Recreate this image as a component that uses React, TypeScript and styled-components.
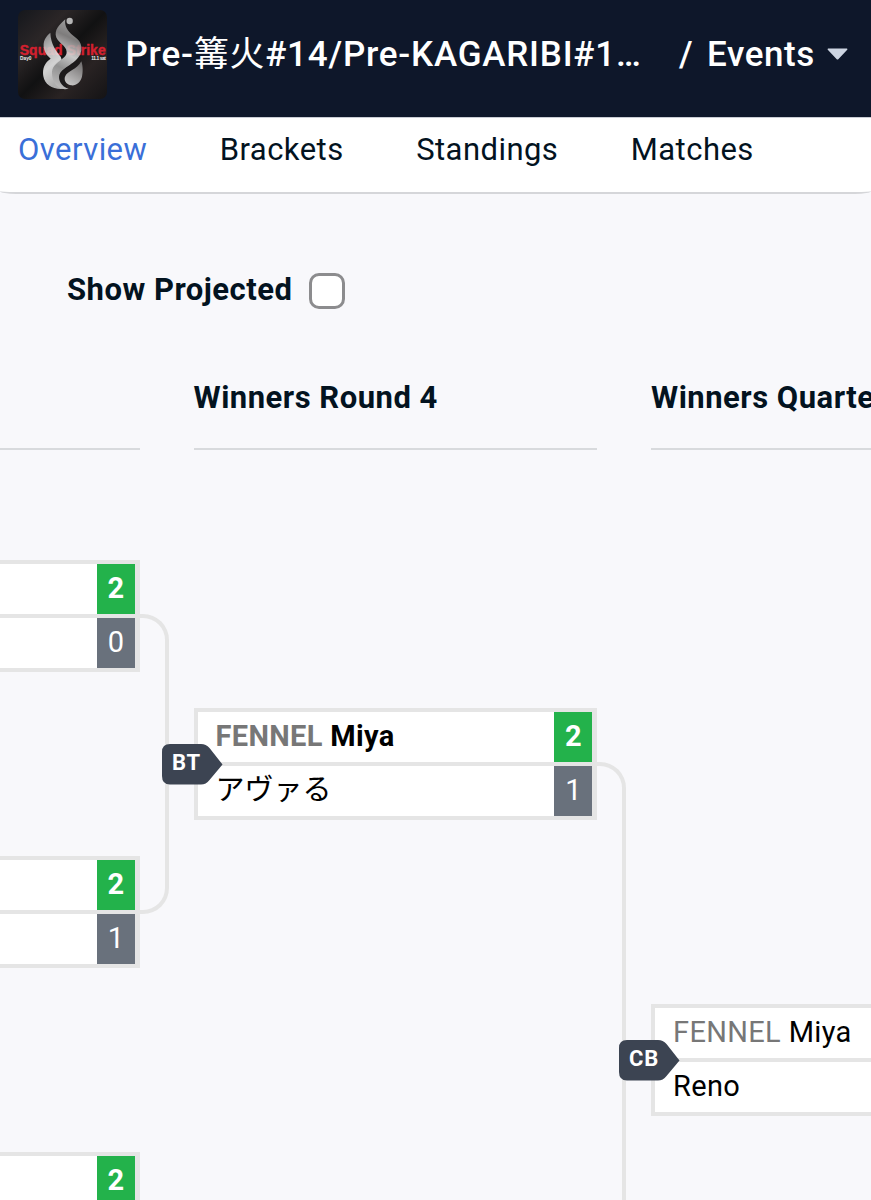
import React from "react";
import styled, { createGlobalStyle } from "styled-components";

const GlobalStyle = createGlobalStyle`
  * { box-sizing: border-box; }
  html, body { margin: 0; padding: 0; }
  body {
    background: #f8f8fb;
    color: #03131f;
    font-family: Roboto, "Noto Sans CJK JP", sans-serif;
    overflow: hidden;
  }
`;

const Page = styled.div`
  width: 871px;
  height: 1200px;
  overflow: hidden;
  background: #f8f8fb;
`;

const Header = styled.header`
  display: flex;
  align-items: center;
  height: 117px;
  padding: 0 0 8px 18px;
  background: #0e172a;
  color: #fff;
  font-size: 35px;
  font-weight: 500;
  line-height: 42px;
  white-space: nowrap;
`;

const Logo = styled.svg`
  flex: none;
  width: 89px;
  height: 89px;
  margin-right: 18.5px;
`;

const Title = styled.h1`
  flex: none;
  width: 553.5px;
  margin: 0;
  font: inherit;
  letter-spacing: 0.78px;
`;

const Kanji = styled.span`
  font-weight: 400;
  font-size: 35px;
`;

const Slash = styled.span`
  width: 28px;
`;

const Events = styled.span`
  letter-spacing: 0.6px;
  margin-right: 12.5px;
`;

const Caret = styled.svg`
  width: 21px;
  height: 12px;
  margin-top: -2px;
`;

const Nav = styled.nav`
  display: flex;
  gap: 72.5px;
  height: 77px;
  padding: 13px 0 0 18px;
  background: #fff;
  border-top: 1px solid #c9ccd4;
  border-bottom: 2px solid #d5d6d9;
  border-radius: 0 0 16px 16px / 0 0 3px 3px;
`;

const Tab = styled.a<{ $active?: boolean }>`
  font-size: 31px;
  line-height: 38px;
  letter-spacing: 0.45px;
  color: ${(p) => (p.$active ? "#3a6fd8" : "#03131f")};
`;

const Projected = styled.label`
  display: flex;
  align-items: center;
  gap: 17px;
  height: 36px;
  margin: 79px 0 0 67px;
  font-size: 31px;
  font-weight: 700;
  letter-spacing: 0.5px;
`;

const ProjectedText = styled.span`
  line-height: 36px;
  margin-top: -3px;
`;

const Checkbox = styled.input`
  appearance: none;
  width: 36px;
  height: 36px;
  margin: 0;
  border: 3px solid #8c8c8e;
  border-radius: 10px;
  background: #fff;
`;

const Board = styled.main`
  display: flex;
  width: 1400px;
  margin: 67px 0 0 -264px;
`;

const Round = styled.section`
  flex: none;
  width: 403.5px;
`;

const RoundTitle = styled.h2`
  height: 74px;
  margin: 0;
  padding-top: 1px;
  border-bottom: 2px solid #d8dadd;
  font-size: 31px;
  line-height: 42px;
  font-weight: 700;
  letter-spacing: 0.5px;
  white-space: nowrap;
`;

const Match = styled.article<{ $gap: number }>`
  position: relative;
  display: flex;
  flex-direction: column;
  gap: 4px;
  height: 112px;
  margin-top: ${(p) => p.$gap}px;
  padding: 4px 4.6px 4px 4px;
  background: #e5e5e5;
`;

const Entrant = styled.div<{ $winner?: boolean }>`
  display: flex;
  flex: 1;
  background: #fff;
  color: #000;
  font-size: 29px;
  line-height: 49px;
  font-weight: ${(p) => (p.$winner ? 700 : 400)};
`;

const Name = styled.span`
  flex: 1;
  padding-left: 18px;
  letter-spacing: 0.35px;
  white-space: nowrap;
`;

const Kana = styled.span`
  display: inline-block;
  font-size: 29px;
  line-height: 48px;
  letter-spacing: 0;
  vertical-align: top;
`;

const Prefix = styled.span`
  color: #777;
`;

const Score = styled.span<{ $winner?: boolean }>`
  width: 38px;
  background: ${(p) => (p.$winner ? "#23b24b" : "#69717c")};
  color: #fff;
  text-align: center;
`;

const Gutter = styled.div`
  flex: none;
  width: 54px;
`;

const Connector = styled.div<{ $top: number; $height: number }>`
  width: 29px;
  height: ${(p) => p.$height}px;
  margin-top: ${(p) => p.$top}px;
  border: 4px solid #e5e5e5;
  border-left: 0;
  border-radius: 0 26px 26px 0;
`;

const Badge = styled.div`
  position: absolute;
  left: -32px;
  top: 35.5px;
  width: 61px;
  height: 41px;
`;

const BadgeShape = styled.svg`
  position: absolute;
  inset: 0;
`;

const BadgeText = styled.span`
  position: relative;
  display: block;
  width: 50px;
  color: #fff;
  font-size: 22px;
  line-height: 38px;
  font-weight: 700;
  letter-spacing: 0.7px;
  text-align: center;
`;

type Player = { prefix?: string; name?: React.ReactNode; score?: number; winner?: boolean };

function MatchCard({ gap, id, players }: { gap: number; id?: string; players: Player[] }) {
  return (
    <Match $gap={gap}>
      {players.map((p, i) => (
        <Entrant key={i} $winner={p.winner}>
          <Name>
            {p.prefix && <Prefix>{p.prefix} </Prefix>}
            {p.name}
          </Name>
          {p.score !== undefined && <Score $winner={p.winner}>{p.score}</Score>}
        </Entrant>
      ))}
      {id && (
        <Badge>
          <BadgeShape width="61" height="41" viewBox="0 0 61 41">
            <path
              d="M8 0H39Q44 0 47.500 4L60.500 20.500L47.500 36Q44 40.500 39 40.500H8Q0 40.500 0 32V8Q0 0 8 0Z"
              fill="#3c4452"
            />
          </BadgeShape>
          <BadgeText>{id}</BadgeText>
        </Badge>
      )}
    </Match>
  );
}

function EventLogo() {
  return (
    <Logo viewBox="0 0 89 89" fontFamily="Liberation Sans" fontWeight="700">
      <defs>
        <linearGradient id="backdrop" x1="0" y1="0" x2="1" y2="1">
          <stop offset="0" stopColor="#15171c" />
          <stop offset="0.28" stopColor="#2b2627" />
          <stop offset="0.5" stopColor="#111112" />
          <stop offset="0.72" stopColor="#292323" />
          <stop offset="1" stopColor="#141315" />
        </linearGradient>
        <linearGradient id="outer" x1="0" y1="0" x2="0.3" y2="1">
          <stop offset="0" stopColor="#8a8a8c" />
          <stop offset="0.3" stopColor="#c9c9c9" />
          <stop offset="0.65" stopColor="#f0f0f0" />
          <stop offset="1" stopColor="#c4c4c4" />
        </linearGradient>
        <linearGradient id="ribbon" x1="0.6" y1="0" x2="0.4" y2="1">
          <stop offset="0" stopColor="#b5b5b5" />
          <stop offset="0.25" stopColor="#8d8b8b" />
          <stop offset="0.5" stopColor="#e2e2e2" />
          <stop offset="0.72" stopColor="#a3a3a3" />
          <stop offset="1" stopColor="#d0d0d0" />
        </linearGradient>
        <linearGradient id="lobe" x1="0.8" y1="0" x2="0.3" y2="1">
          <stop offset="0" stopColor="#7e7c7c" />
          <stop offset="1" stopColor="#dedede" />
        </linearGradient>
      </defs>
      <rect width="89" height="89" rx="7" fill="url(#backdrop)" />
      <text x="1.700" y="45" fill="#d3202f" stroke="#d3202f" strokeWidth="0.400" fontSize="14" textLength="86">
        Squad Strike
      </text>
      <g transform="translate(-2 -2) scale(0.3333)" opacity="0.87">
        <path
          d="M103 74C85 88 74 112 92 140L104 152C88 162 78 180 82 205C86 230 110 245 140 243C118 228 110 200 124 184C136 170 140 156 134 146C122 130 104 110 103 74Z"
          fill="url(#outer)"
        />
        <path
          d="M148 34C138 44 118 58 119 80C121 104 152 110 152 132C152 156 108 160 108 196C108 222 124 240 140 243C148 244 154 243 158 242C132 228 126 205 138 190C152 172 192 160 196 126C200 96 174 88 160 72C148 58 146 46 148 34Z"
          fill="url(#ribbon)"
        />
        <path d="M190 160C170 172 138 180 130 200C126 216 136 236 158 242C150 236 142 218 148 204C156 190 184 184 190 160Z" fill="#1d1b1c" />
        <path d="M196 160C202 176 200 196 198 206C194 222 180 234 166 232C150 230 142 216 148 204C154 190 184 184 196 160Z" fill="url(#lobe)" />
        <circle cx="161" cy="39" r="9.500" fill="#cdcdcd" />
      </g>
      <text x="2" y="50" fill="#eee" fontSize="4.800" textLength="11.500">
        Day0
      </text>
      <text x="73.300" y="50" fill="#eee" fontSize="4.800" textLength="14.500">
        11.1 sat
      </text>
    </Logo>
  );
}

export default function App() {
  return (
    <Page>
      <GlobalStyle />
      <Header>
        <EventLogo />
        <Title>
          Pre-<Kanji lang="ja">篝火</Kanji>#14/Pre-KAGARIBI#1…
        </Title>
        <Slash>/</Slash>
        <Events>Events</Events>
        <Caret viewBox="0 0 21 12">
          <path d="M1 0.500H20Q21 1 20 2L11.500 11Q10.500 12 9.500 11L1 2Q0 1 1 0.500Z" fill="#cdd5e2" />
        </Caret>
      </Header>
      <Nav>
        <Tab $active>Overview</Tab>
        <Tab>Brackets</Tab>
        <Tab>Standings</Tab>
        <Tab>Matches</Tab>
      </Nav>
      <Projected>
        <ProjectedText>Show Projected</ProjectedText>
        <Checkbox type="checkbox" />
      </Projected>
      <Board>
        <Round>
          <RoundTitle />
          <MatchCard gap={110} players={[{ score: 2, winner: true }, { score: 0 }]} />
          <MatchCard gap={184} players={[{ score: 2, winner: true }, { score: 1 }]} />
          <MatchCard gap={184} players={[{ score: 2, winner: true }, { score: 0 }]} />
        </Round>
        <Gutter>
          <Connector $top={238} $height={300} />
        </Gutter>
        <Round>
          <RoundTitle>Winners Round 4</RoundTitle>
          <MatchCard
            gap={258}
            id="BT"
            players={[
              { prefix: "FENNEL", name: "Miya", score: 2, winner: true },
              { name: <Kana lang="ja">アヴァる</Kana>, score: 1 },
            ]}
          />
        </Round>
        <Gutter>
          <Connector $top={386} $height={596} />
        </Gutter>
        <Round>
          <RoundTitle>Winners Quarter-Final</RoundTitle>
          <MatchCard gap={554} id="CB" players={[{ prefix: "FENNEL", name: "Miya" }, { name: "Reno" }]} />
        </Round>
      </Board>
    </Page>
  );
}
